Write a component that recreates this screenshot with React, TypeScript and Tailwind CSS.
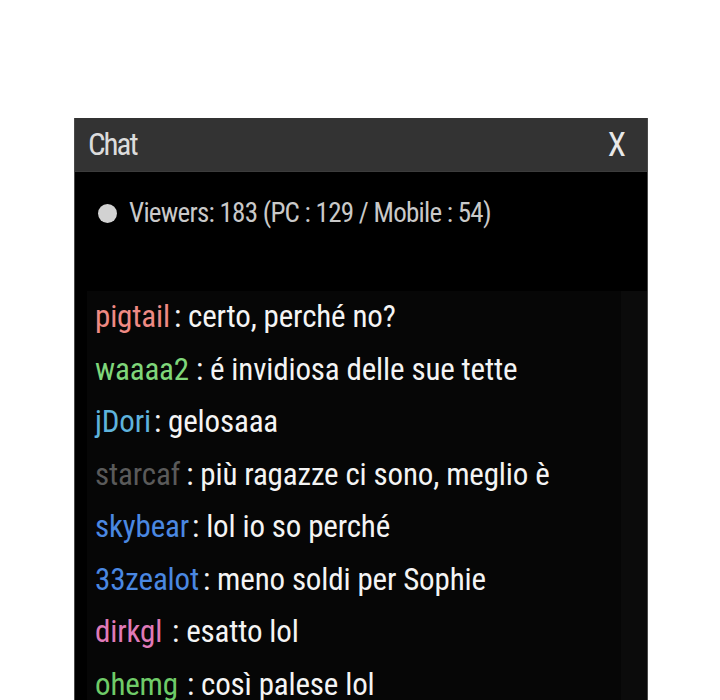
const messages = [
  { name: "pigtail", color: "text-[#ef8a84]", gap: "mr-[4px]", text: ": certo, perché no?" },
  { name: "waaaa2", color: "text-[#7fd67a]", gap: "mr-[7px]", text: ": é invidiosa delle sue tette" },
  { name: "jDori", color: "text-[#5eb3dc]", gap: "mr-[3px]", text: ": gelosaaa" },
  { name: "starcaf", color: "text-[#5a5a5a]", gap: "mr-[6px]", text: ": più ragazze ci sono, meglio è" },
  { name: "skybear", color: "text-[#4a88e2]", gap: "mr-[3px]", text: ": lol io so perché" },
  { name: "33zealot", color: "text-[#4a88e2]", gap: "mr-[4px]", text: ": meno soldi per Sophie" },
  { name: "dirkgl", color: "text-[#e07ab8]", gap: "mr-[10px]", text: ": esatto lol" },
  { name: "ohemg", color: "text-[#6fcb68]", gap: "mr-[9px]", text: ": così palese lol" },
];

export default function App() {
  return (
    <div className="h-[700px] overflow-hidden bg-white font-['Roboto_Condensed','Roboto',sans-serif]">
      <div className="ml-[74px] mt-[118px] w-[574px] border-x border-[#4a4a4a] bg-black">
        <div className="flex h-[54px] items-center justify-between border-b border-[#3c3c3c] bg-[#333333] pl-[13px] pr-[21px]">
          <span className="text-[31px] leading-none tracking-[-2px] text-[#dcdcdc]">Chat</span>
          <span className="text-[33px] leading-none text-[#e8e8e8]">X</span>
        </div>

        <div className="mt-[21px] flex h-[40px] items-center pl-[23px]">
          <span className="h-[19px] w-[19px] rounded-full bg-[#d2d2d2]" />
          <span className="ml-[12px] text-[27px] leading-none tracking-[-0.75px] text-[#c9c9c9]">
            Viewers: 183 (PC : 129 / Mobile : 54)
          </span>
        </div>

        <div className="ml-[12px] mt-[58px] flex">
          <div className="flex-1 bg-[#060606] pl-[8px]">
            {messages.map((m) => (
              <div
                key={m.name}
                className="h-[52.5px] whitespace-nowrap text-[31px] leading-[52.5px] tracking-[-0.15px] text-[#f4f4f4]"
              >
                <span className={`${m.color} ${m.gap}`}>{m.name}</span>
                <span>{m.text}</span>
              </div>
            ))}
          </div>
          <div className="w-[26px] bg-[#0b0b0b]" />
        </div>
      </div>
    </div>
  );
}
